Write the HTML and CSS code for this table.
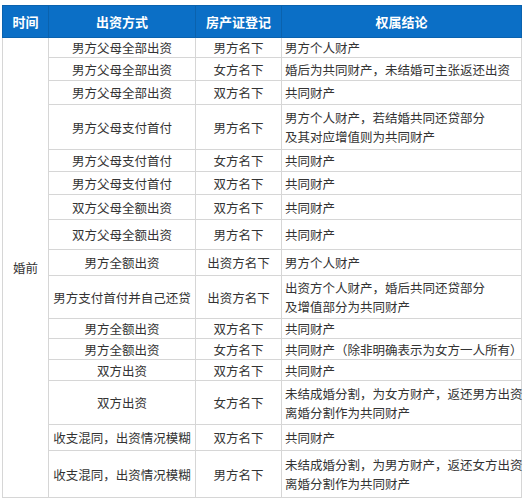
FILE: index.html
```html
<!DOCTYPE html>
<html lang="zh">
<head>
<meta charset="utf-8">
<link rel="stylesheet" href="styles.css">
</head>
<body>
<div class="page">
<table class="tbl">
  <colgroup>
    <col class="c1"><col class="c2"><col class="c3"><col class="c4">
  </colgroup>
  <thead>
    <tr><th>时间</th><th>出资方式</th><th>房产证登记</th><th>权属结论</th></tr>
  </thead>
  <tbody>
    <tr><td class="time" rowspan="16">婚前</td><td class="ctr">男方父母全部出资</td><td class="ctr">男方名下</td><td class="res">男方个人财产</td></tr>
    <tr><td class="ctr">男方父母全部出资</td><td class="ctr">女方名下</td><td class="res">婚后为共同财产，未结婚可主张返还出资</td></tr>
    <tr><td class="ctr">男方父母全部出资</td><td class="ctr">双方名下</td><td class="res">共同财产</td></tr>
    <tr><td class="ctr">男方父母支付首付</td><td class="ctr">男方名下</td><td class="res">男方个人财产，若结婚共同还贷部分<br>及其对应增值则为共同财产</td></tr>
    <tr><td class="ctr">男方父母支付首付</td><td class="ctr">女方名下</td><td class="res">共同财产</td></tr>
    <tr><td class="ctr">男方父母支付首付</td><td class="ctr">双方名下</td><td class="res">共同财产</td></tr>
    <tr><td class="ctr">双方父母全额出资</td><td class="ctr">双方名下</td><td class="res">共同财产</td></tr>
    <tr><td class="ctr">双方父母全额出资</td><td class="ctr">男方名下</td><td class="res">共同财产</td></tr>
    <tr><td class="ctr">男方全额出资</td><td class="ctr">出资方名下</td><td class="res">男方个人财产</td></tr>
    <tr><td class="ctr">男方支付首付并自己还贷</td><td class="ctr">出资方名下</td><td class="res">出资方个人财产，婚后共同还贷部分<br>及增值部分为共同财产</td></tr>
    <tr><td class="ctr">男方全额出资</td><td class="ctr">双方名下</td><td class="res">共同财产</td></tr>
    <tr><td class="ctr">男方全额出资</td><td class="ctr">女方名下</td><td class="res">共同财产（除非明确表示为女方一人所有）</td></tr>
    <tr><td class="ctr">双方出资</td><td class="ctr">双方名下</td><td class="res">共同财产</td></tr>
    <tr><td class="ctr">双方出资</td><td class="ctr">女方名下</td><td class="res">未结成婚分割，为女方财产，返还男方出资<br>离婚分割作为共同财产</td></tr>
    <tr><td class="ctr">收支混同，出资情况模糊</td><td class="ctr">双方名下</td><td class="res">共同财产</td></tr>
    <tr><td class="ctr">收支混同，出资情况模糊</td><td class="ctr">男方名下</td><td class="res">未结成婚分割，为男方财产，返还女方出资<br>离婚分割作为共同财产</td></tr>
  </tbody>
</table>
</div>
</body>
</html>
```

FILE: styles.css
```css
html, body {
  margin: 0;
  padding: 0;
  background: #ffffff;
}
.page {
  padding: 5px 0 0 2px;
  font-family: "Noto Sans CJK SC", "Noto Sans", sans-serif;
  color: #333333;
}
.tbl {
  border-collapse: collapse;
  table-layout: fixed;
  width: 519px;
  font-size: 12.5px;
  line-height: 19px;
}
.c1 { width: 46px; }
.c2 { width: 147px; }
.c3 { width: 86px; }
.c4 { width: 240px; }
.tbl th {
  background: #0b6fc6;
  color: #ffffff;
  font-weight: bold;
  font-size: 13px;
  height: 31px;
  padding: 0;
  border: 1px solid #0a62ae;
  text-align: center;
  vertical-align: middle;
}
.tbl td {
  border: 1px solid #d6d6d6;
  padding: 0;
  vertical-align: middle;
  white-space: nowrap;
}
.tbl .ctr { text-align: center; }
.tbl .res { text-align: left; padding-left: 3px; }
.tbl .time { text-align: center; }
.tbl tbody tr:nth-child(1) { height: 20px; }
.tbl tbody tr:nth-child(2) { height: 23px; }
.tbl tbody tr:nth-child(3) { height: 24px; }
.tbl tbody tr:nth-child(4) { height: 45px; }
.tbl tbody tr:nth-child(5) { height: 22px; }
.tbl tbody tr:nth-child(6) { height: 23px; }
.tbl tbody tr:nth-child(7) { height: 25px; }
.tbl tbody tr:nth-child(8) { height: 30px; }
.tbl tbody tr:nth-child(9) { height: 26px; }
.tbl tbody tr:nth-child(10) { height: 43px; }
.tbl tbody tr:nth-child(11) { height: 19px; }
.tbl tbody tr:nth-child(12) { height: 21px; }
.tbl tbody tr:nth-child(13) { height: 21px; }
.tbl tbody tr:nth-child(14) { height: 44px; }
.tbl tbody tr:nth-child(15) { height: 26px; }
.tbl tbody tr:nth-child(16) { height: 47px; }
```
